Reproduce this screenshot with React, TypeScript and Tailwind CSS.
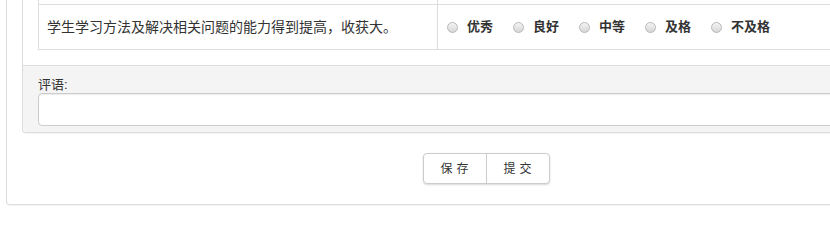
const options = ["优秀", "良好", "中等", "及格", "不及格"];

const Radio: React.FC<{ label: string }> = ({ label }) => {
  return (
    <label className="flex items-center mr-[20px]">
      <span className="w-[11px] h-[11px] rounded-full border border-[#b8b8b8] bg-linear-to-b from-[#f4f4f4] to-[#d6d6d6]" />
      <span className="ml-[9px] text-[13px] font-bold text-[#333]">{label}</span>
    </label>
  );
};

export default function App() {
  return (
    <div
      className="relative w-[830px] h-[229px] overflow-hidden bg-white"
      style={{ fontFamily: '"Liberation Sans", "Noto Sans CJK SC", sans-serif' }}
    >
      <div className="ml-[6px] w-[960px] border-l border-r border-b border-[#ddd] rounded-b-[4px] shadow-[0_1px_1px_rgba(0,0,0,0.05)] pl-[15px] pr-[15px]">
        {/* inner panel */}
        <div className="border-l border-r border-b border-[#ddd] rounded-b-[4px] shadow-[0_1px_1px_rgba(0,0,0,0.05)]">
          <div className="pl-[15px] pr-[15px] pb-[15px] bg-white">
            <div className="border-l border-r border-[#ddd]">
              {/* previous row tail */}
              <div className="flex h-[5px] border-b border-[#ddd]">
                <div className="w-[399px] border-r border-[#ddd]" />
                <div className="flex-1" />
              </div>
              <div className="flex h-[45px] border-b border-[#ddd]">
                <div className="w-[399px] border-r border-[#ddd] pl-[8px] flex items-center text-[14px] text-[#333]">
                  学生学习方法及解决相关问题的能力得到提高，收获大。
                </div>
                <div className="flex-1 flex items-center pl-[9px]">
                  {options.map((o) => (
                    <Radio key={o} label={o} />
                  ))}
                </div>
              </div>
            </div>
          </div>
          {/* footer */}
          <div className="bg-[#f4f4f4] border-t border-[#ddd] pl-[15px] pr-[15px] pt-[11px] pb-[6px] rounded-b-[4px]">
            <div className="text-[13px] leading-[16px] text-[#333]">评语:</div>
            <textarea className="block w-full h-[33px] bg-white border border-[#ccc] rounded-[4px] shadow-[inset_0_1px_1px_rgba(0,0,0,0.075)] resize-none outline-none" />
          </div>
        </div>
        {/* buttons */}
        <div className="flex justify-center pt-[20px] pb-[20px]">
          <div className="flex h-[31px] border border-[#ccc] rounded-[4px] bg-white shadow-[0_1px_2px_rgba(0,0,0,0.15)]">
            <button className="w-[63px] text-[12px] tracking-[4px] pl-[4px] text-[#333] border-r border-[#ccc]">
              保存
            </button>
            <button className="w-[62px] text-[12px] tracking-[4px] pl-[4px] text-[#333]">
              提交
            </button>
          </div>
        </div>
      </div>
    </div>
  );
}
